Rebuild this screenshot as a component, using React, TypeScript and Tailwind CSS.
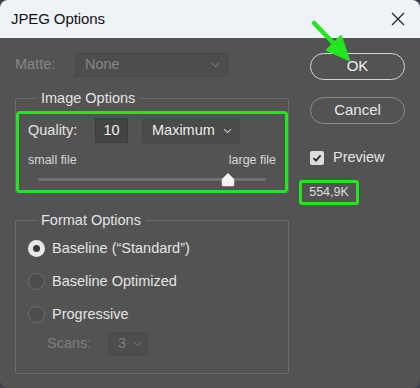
import React from "react";

const font = { fontFamily: '"Liberation Sans", Arial, sans-serif' };

function Chevron({ className }: { className?: string }) {
  return (
    <svg width="9" height="6" viewBox="0 0 9 6" className={className}>
      <path d="M1 1.2 L4.5 4.6 L8 1.2" fill="none" stroke="currentColor" strokeWidth="1.1" />
    </svg>
  );
}

function Radio({ checked, label }: { checked?: boolean; label: string }) {
  return (
    <div className="flex items-center h-[33px]">
      <span
        className={
          checked
            ? "w-[17px] h-[17px] rounded-full bg-[#e8e8e8] flex items-center justify-center"
            : "w-[17px] h-[17px] rounded-full border border-[#6e6e6e] bg-[#4d4d4d]"
        }
      >
        {checked && <span className="w-[7px] h-[7px] rounded-full bg-[#3a3a3a]" />}
      </span>
      <span className="ml-[7px] text-[#e4e4e4]">{label}</span>
    </div>
  );
}

export default function App() {
  return (
    <div className="w-[420px] h-[388px] bg-[#3d4147] text-[14.5px]" style={font}>
      <div className="w-full h-full rounded-[8px] overflow-hidden bg-[#535353] flex flex-col">
        {/* title bar */}
        <div className="h-[38px] bg-[#eef3f8] flex items-center justify-between pl-[11px] pr-[14px] relative">
          <span className="text-[15px] text-[#111] tracking-[-0.1px]">JPEG Options</span>
          <svg width="16" height="16" viewBox="0 0 16 16">
            <path d="M2 2 L14 14 M14 2 L2 14" stroke="#222" strokeWidth="1.2" />
          </svg>
          {/* annotation arrow */}
          <svg width="60" height="60" viewBox="0 0 60 60" className="absolute left-[305px] top-[14px] z-10">
            <path d="M9 9 L36 37" stroke="#22e61e" strokeWidth="4.5" strokeLinecap="round" />
            <path d="M44 46 L22 36 L36 22 Z" fill="#22e61e" stroke="#22e61e" strokeWidth="2" strokeLinejoin="round" />
          </svg>
        </div>

        <div className="flex flex-1 pl-[15px] pr-[15px] pt-[15px]">
          {/* left column */}
          <div className="w-[274px] flex flex-col">
            <div className="flex items-center h-[24px]">
              <span className="w-[60px] text-[#868686]">Matte:</span>
              <div className="w-[153px] h-[24px] bg-[#4d4d4d] border border-[#484848] rounded-[2px] flex items-center justify-between pl-[9px] pr-[7px] text-[#878787]">
                <span>None</span>
                <Chevron className="text-[#7a7a7a]" />
              </div>
            </div>

            <fieldset className="mt-[12px] border border-[#6b6b6b] rounded-[1px] h-[104px] px-0 pb-0">
              <legend className="ml-[20px] px-[5px] text-[#e4e4e4] leading-[18px]">Image Options</legend>
              <div className="mt-[4px] h-[82px] border-[3px] border-[#22e61e] rounded-[4px] px-[9px] pt-[3px]">
                <div className="flex items-center h-[27px]">
                  <span className="w-[67px] text-[#e4e4e4]">Quality:</span>
                  <div className="w-[33px] h-[25px] bg-[#444] border border-[#3b3b3b] flex items-center justify-center text-[#ededed]">10</div>
                  <div className="ml-[14px] w-[98px] h-[26px] bg-[#4a4a4a] rounded-[2px] flex items-center justify-between pl-[10px] pr-[8px] text-[#ededed]">
                    <span>Maximum</span>
                    <Chevron className="text-[#cfcfcf]" />
                  </div>
                </div>
                <div className="flex justify-between mt-[8px] text-[12.5px] text-[#d8d8d8] leading-[16px]">
                  <span>small file</span>
                  <span>large file</span>
                </div>
                <div className="relative mt-[4px] mx-[10px] h-[14px] flex items-center">
                  <div className="w-full h-[3px] bg-[#707070] rounded-full" />
                  <svg width="14" height="14" viewBox="0 0 14 14" className="absolute left-[183px] top-[1px]">
                    <path d="M7 1 L12.5 6.5 V12.5 H1.5 V6.5 Z" fill="#f2f2f2" stroke="#f2f2f2" strokeLinejoin="round" strokeWidth="1.5" />
                  </svg>
                </div>
              </div>
            </fieldset>

            <fieldset className="mt-[18px] border border-[#6b6b6b] rounded-[1px] h-[163px] pl-[12px] pr-0 pb-0">
              <legend className="ml-[8px] px-[5px] text-[#e4e4e4] leading-[18px]">Format Options</legend>
              <div className="mt-[3px] flex flex-col">
                <Radio checked label="Baseline (“Standard”)" />
                <Radio label="Baseline Optimized" />
                <Radio label="Progressive" />
                <div className="flex items-center h-[24px] mt-[1px] pl-[19px]">
                  <span className="w-[61px] text-[#7e7e7e]">Scans:</span>
                  <div className="w-[40px] h-[24px] bg-[#4d4d4d] border border-[#494949] rounded-[2px] flex items-center justify-between pl-[9px] pr-[5px] text-[#7e7e7e]">
                    <span>3</span>
                    <Chevron className="text-[#6e6e6e]" />
                  </div>
                </div>
              </div>
            </fieldset>
          </div>

          {/* right column */}
          <div className="ml-auto w-[106px] flex flex-col items-end">
            <button className="w-[95px] h-[27px] rounded-full border-[1.5px] border-[#d4d4d4] text-[#f0f0f0] text-[15px] flex items-center justify-center">
              OK
            </button>
            <button className="mt-[17px] w-[95px] h-[27px] rounded-full border border-[#8c8c8c] text-[#e8e8e8] text-[15px] flex items-center justify-center">
              Cancel
            </button>
            <div className="mt-[23px] w-[95px] flex items-center">
              <span className="w-[14px] h-[14px] bg-[#dcdcdc] rounded-[2px] flex items-center justify-center">
                <svg width="10" height="10" viewBox="0 0 10 10">
                  <path d="M1.5 5.2 L4 7.6 L8.6 2.4" fill="none" stroke="#2a2a2a" strokeWidth="1.8" />
                </svg>
              </span>
              <span className="ml-[9px] text-[#e6e6e6]">Preview</span>
            </div>
            <div className="mt-[11px] self-start w-[60px] h-[25px] border-[3px] border-[#22e61e] rounded-[3px] flex items-center justify-center text-[12.5px] text-[#dedede]">
              554,9K
            </div>
          </div>
        </div>
      </div>
    </div>
  );
}
